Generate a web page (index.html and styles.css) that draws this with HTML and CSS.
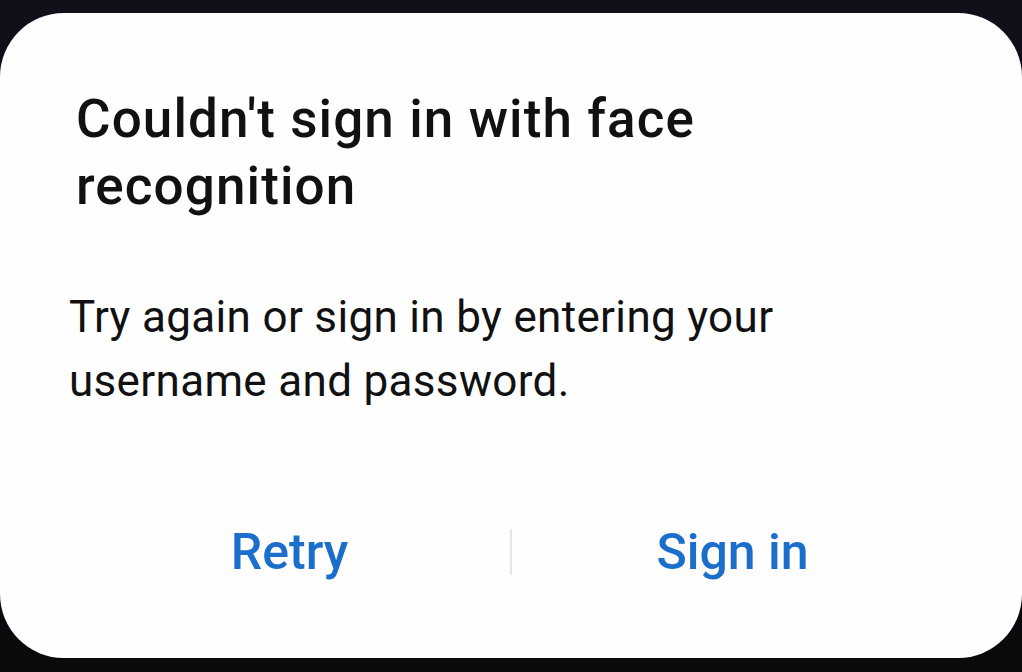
FILE: index.html
```html
<!DOCTYPE html>
<html lang="en">
  <head>
    <meta charset="UTF-8" />
    <meta name="viewport" content="width=device-width, initial-scale=1.0" />
    <title>Face recognition</title>
    <link rel="stylesheet" href="styles.css">
  </head>
  <body>
    <!-- Sign-in failure dialog -->
    <div class="dialog">
      <h1 class="dialogTitle">Couldn't sign in with face recognition</h1>
      <p class="dialogText">
        Try again or sign in by entering your username and password.
      </p>
      <div class="dialogActions">
        <button class="actionButton">Retry</button>
        <span class="divider"></span>
        <button class="actionButton">Sign in</button>
      </div>
    </div>
  </body>
</html>
```

FILE: styles.css
```css
body {
  font-family: "Roboto", "Liberation Sans", sans-serif;
  background: linear-gradient(#110f1a, #0a0a0d);
  margin: 0;
  padding: 13px 0 0;
  height: 672px;
  box-sizing: border-box;
  overflow: hidden;
}
.dialog {
  background-color: #fefefe;
  border-radius: 64px;
  height: 645px;
  box-sizing: border-box;
  padding: 73px 69px 0 69px;
}
.dialogTitle {
  margin: 0 0 0 7px;
  font-size: 53px;
  line-height: 67px;
  font-weight: 500;
  letter-spacing: 1.1px;
  color: #111;
  width: 700px;
}
.dialogText {
  margin: 65px 0 0;
  font-size: 44px;
  line-height: 64px;
  font-weight: 400;
  letter-spacing: 0.33px;
  color: #111;
  width: 740px;
}
.dialogActions {
  display: flex;
  align-items: center;
  margin-top: 109px;
}
.actionButton {
  flex: 1;
  border: none;
  background: none;
  padding: 0;
  font-family: inherit;
  font-size: 50px;
  line-height: 60px;
  font-weight: 500;
  color: #1b6fcb;
  cursor: pointer;
}
.divider {
  width: 2px;
  height: 46px;
  background-color: #e6e6e6;
}
```
